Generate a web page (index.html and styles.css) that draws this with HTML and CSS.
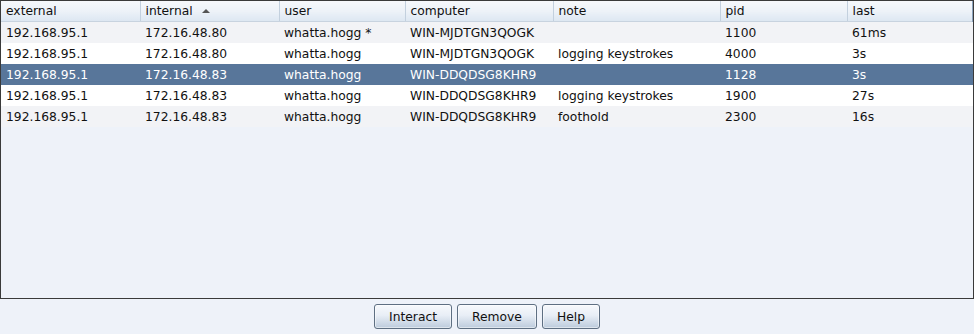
FILE: index.html
```html
<!DOCTYPE html>
<html>
<head>
<meta charset="utf-8">
<link rel="stylesheet" href="styles.css">
</head>
<body>
<div class="app">
  <div class="panel">
    <table class="grid">
      <colgroup>
        <col class="c1"><col class="c2"><col class="c3"><col class="c4"><col class="c5"><col class="c6"><col class="c7">
      </colgroup>
      <thead>
        <tr>
          <th>external</th>
          <th><span class="sorted">internal <span class="arrow"></span></span></th>
          <th>user</th>
          <th>computer</th>
          <th>note</th>
          <th>pid</th>
          <th class="last">last</th>
        </tr>
      </thead>
      <tbody>
        <tr class="odd"><td>192.168.95.1</td><td>172.16.48.80</td><td>whatta.hogg *</td><td>WIN-MJDTGN3QOGK</td><td></td><td>1100</td><td>61ms</td></tr>
        <tr class="even"><td>192.168.95.1</td><td>172.16.48.80</td><td>whatta.hogg</td><td>WIN-MJDTGN3QOGK</td><td>logging keystrokes</td><td>4000</td><td>3s</td></tr>
        <tr class="sel"><td>192.168.95.1</td><td>172.16.48.83</td><td>whatta.hogg</td><td>WIN-DDQDSG8KHR9</td><td></td><td>1128</td><td>3s</td></tr>
        <tr class="even"><td>192.168.95.1</td><td>172.16.48.83</td><td>whatta.hogg</td><td>WIN-DDQDSG8KHR9</td><td>logging keystrokes</td><td>1900</td><td>27s</td></tr>
        <tr class="odd"><td>192.168.95.1</td><td>172.16.48.83</td><td>whatta.hogg</td><td>WIN-DDQDSG8KHR9</td><td>foothold</td><td>2300</td><td>16s</td></tr>
      </tbody>
    </table>
  </div>
  <div class="buttons">
    <button class="btn">Interact</button>
    <button class="btn">Remove</button>
    <button class="btn">Help</button>
  </div>
</div>
</body>
</html>
```
FILE: styles.css
```css
html, body {
  margin: 0;
  padding: 0;
  background: #eef2f9;
}
body {
  font-family: "DejaVu Sans", sans-serif;
  font-size: 12.3px;
  color: #111;
}
.app {
  width: 974px;
  height: 334px;
  display: flex;
  flex-direction: column;
}
.panel {
  height: 299px;
  box-sizing: border-box;
  border: 1px solid #3a3a3a;
  background: #eef2f9;
  overflow: hidden;
}
.grid {
  table-layout: fixed;
  border-collapse: collapse;
  width: 972px;
}
.c1 { width: 139px; }
.c2 { width: 139px; }
.c3 { width: 126px; }
.c4 { width: 148px; }
.c5 { width: 167px; }
.c6 { width: 127px; }
.c7 { width: 126px; }
th {
  height: 20px;
  padding: 0 5px;
  text-align: left;
  font-weight: normal;
  color: #111;
  background: linear-gradient(#f6f8fb 0%, #edf2f8 50%, #dde7f2 100%);
  border-right: 1px solid #c3d0de;
  border-bottom: 1px solid #c8d3df;
  white-space: nowrap;
}
th.last {
  border-right: 2px solid #8da4bd;
}
.sorted {
  display: inline-flex;
  align-items: center;
  gap: 6px;
}
.arrow {
  width: 0;
  height: 0;
  border-left: 4px solid transparent;
  border-right: 4px solid transparent;
  border-bottom: 4px solid #555;
  margin-left: 3px;
}
td {
  height: 21px;
  padding: 0 5px;
  white-space: nowrap;
  overflow: hidden;
}
tr.odd td { background: #f2f3f6; }
tr.even td { background: #ffffff; }
tr.sel td { background: #58769a; color: #ffffff; }
.buttons {
  flex: 1;
  display: flex;
  justify-content: center;
  align-items: center;
  gap: 5px;
  padding-left: 0;
}
.btn {
  font-family: "DejaVu Sans", sans-serif;
  font-size: 12.3px;
  color: #111;
  height: 25px;
  padding: 0 14px;
  border: 1px solid #5e6f82;
  border-radius: 3px;
  background: linear-gradient(#f7f9fc 0%, #e8eef6 45%, #bccbdc 100%);
  box-shadow: inset 0 0 0 1px rgba(255,255,255,0.5);
}
```
